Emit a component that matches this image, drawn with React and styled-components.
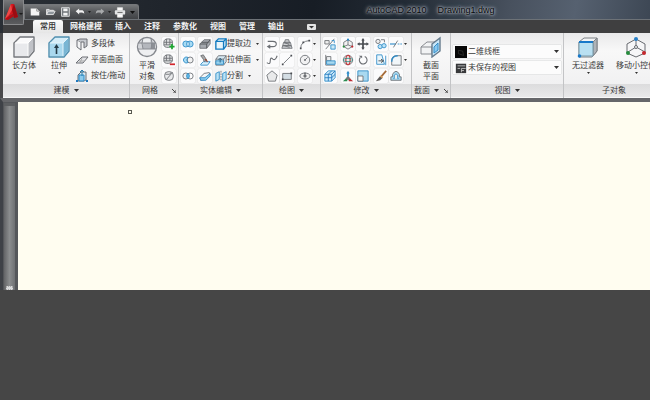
import React from 'react';
import styled, { createGlobalStyle } from 'styled-components';

const GlobalStyle = createGlobalStyle`
	* {
		box-sizing: border-box;
	}

	body {
		margin: 0;
		background: #464646;
		color: #3a3a3a;
		font-family: 'Liberation Sans', 'Noto Sans CJK SC', sans-serif;
		font-size: 8px;
		line-height: 12px;
		overflow-x: hidden;
	}

	button,
	select {
		border: none;
		margin: 0;
		padding: 0;
		background: none;
		color: inherit;
		font: inherit;
	}
`;

const Window = styled.div`
	overflow: hidden;
	background: #4a4a4c;
`;

const Header = styled.header`
	display: flex;
	align-items: flex-start;
	padding-left: 3px;
	background: linear-gradient(100deg, #2a2f35 0%, #20252c 25%, #171d25 48%, #232b35 62%, #48515e 78%, #566170 88%, #3c4653 100%);
`;

const AppButton = styled.button`
	display: flex;
	align-items: center;
	justify-content: center;
	width: 21px;
	height: 25px;
	margin-right: -21px;
	z-index: 1;
	border: 1px solid #88898b;
	border-top: none;
	border-radius: 0 0 2px 0;
	background: linear-gradient(#77787a, #47484b 55%, #5b5c5e);
`;

const HeaderMain = styled.div`
	flex: 1;
	min-width: 0;
`;

const TitleBar = styled.div`
	display: flex;
	align-items: flex-end;
	height: 20px;
	padding-left: 21px;
	border-bottom: 1px solid #6d7277;
`;

const QuickAccess = styled.div`
	display: flex;
	align-items: center;
	height: 15px;
	padding: 0 1px 0 2px;
	border: 1px solid #75777a;
	border-bottom: none;
	border-radius: 0 3px 0 0;
	background: linear-gradient(#77797b, #55575a 50%, #404245);
`;

const QuickButton = styled.button`
	display: flex;
	align-items: center;
	justify-content: center;
	width: ${props => props.$width || 15}px;
	height: 13px;
`;

const WindowTitle = styled.h1`
	flex: 1;
	display: flex;
	justify-content: center;
	gap: 11px;
	margin: 0;
	padding-left: 72px;
	color: #07090d;
	font: 9px/18px 'Liberation Sans', sans-serif;
	text-shadow: 0 0 2px #a4aab2, 0 0 3px #a4aab2, 0 0 4px #7e8690, 0 0 5px #7e8690;
`;

const Tabs = styled.nav`
	display: flex;
	gap: 1px;
	height: 13px;
	padding-left: 30px;
	background: #3f3f40;
`;

const Tab = styled.button`
	padding: 1px ${props => (props.$active ? 7 : 6)}px 0;
	border-radius: 2px 2px 0 0;
	background: ${props => (props.$active ? 'linear-gradient(#fafafa, #e6e6e6)' : 'none')};
	color: ${props => (props.$active ? '#333' : '#f4f4f4')};
	font-weight: ${props => (props.$active ? 500 : 700)};
`;

const TabToggle = styled.button`
	display: flex;
	align-items: center;
	padding: 1px 16px 0;
`;

const Ribbon = styled.section`
	display: flex;
	margin-left: 3px;
	height: 65px;
	overflow: hidden;
	background: #f0f0f1;
`;

const PanelBox = styled.div`
	display: flex;
	flex-direction: column;
	flex: ${props => (props.$grow ? 1 : 0)} 0 ${props => props.$width}px;
	border-right: 1px solid #c3c4c6;
`;

const PanelBody = styled.div`
	flex: 1;
	display: flex;
	gap: ${props => props.$gap || 0}px;
	padding: 2px 2px 0;
	background: linear-gradient(#e9e9ea, #f8f8f8 35%, #f1f1f2);
`;

const PanelTitle = styled.h2`
	display: flex;
	align-items: center;
	justify-content: center;
	gap: 4px;
	height: 14px;
	margin: 0;
	padding-left: ${props => (props.$inset ? 10 : 0)}px;
	background: linear-gradient(#dcdcdd, #e9e9ea);
	border-bottom: 1px solid #f8f8f8;
	font-size: 8px;
	font-weight: 400;
`;

const Launcher = styled.span`
	display: flex;
	margin-left: ${props => (props.$wide ? 10 : 1)}px;
`;

const Group = styled.div`
	display: flex;
`;

const Column = styled.div`
	display: grid;
	grid-template-columns: repeat(${props => props.$cols || 1}, auto);
	grid-auto-rows: 14px;
	gap: 2px 1px;
	align-content: start;
	padding-top: 2px;
`;

const ToolButton = styled.button`
	display: flex;
	align-items: center;
	justify-content: center;
	width: 14px;
	height: 14px;
	border-radius: 1px;
	background: #fbfbfc;
	box-shadow: 0 0 1px #b4b5b8;
`;

const ArrowButton = styled.button`
	display: flex;
	align-items: center;
	justify-content: center;
	width: 5px;
	height: 14px;
`;

const LabelButton = styled.button`
	display: flex;
	align-items: center;
	gap: ${props => (props.$tight ? 0 : 2)}px;
	white-space: nowrap;
`;

const LabelArrow = styled.span`
	display: flex;
	padding-left: 5px;
`;

const LargeButton = styled.button`
	display: flex;
	flex: 0 0 auto;
	flex-direction: column;
	align-items: center;
	width: ${props => props.$width || 34}px;
	padding-top: 1px;
	line-height: 11px;
	white-space: nowrap;
`;

const LargeLabel = styled.span`
	padding: 2px 0 1px;
`;

const ViewFields = styled.div`
	flex: 1;
	display: flex;
	flex-direction: column;
	justify-content: center;
	gap: 3px;
`;

const Field = styled.label`
	display: flex;
	align-items: center;
	gap: 1px;
	height: 13px;
	padding: 0 2px;
	background: #fcfcfc;
	box-shadow: 0 0 1px #a8a9ac;
`;

const FieldSelect = styled.select`
	flex: 1;
	min-width: 0;
	appearance: none;
	outline: none;
`;

const Workspace = styled.main`
	display: flex;
	min-height: 192px;
	border-top: 4px solid #66676a;
	border-left: 3px solid #3f4247;
`;

const Dock = styled.aside`
	display: flex;
	flex-direction: column;
	justify-content: space-between;
	align-items: center;
	width: 15px;
	border: solid #55575a;
	border-width: 1px 3px 0 1px;
	background: linear-gradient(90deg, #636466, #8b8d8e 50%, #6e7072);
`;

const DockGrip = styled.div`
	width: 11px;
	height: 3px;
	background: #5d5f61;
`;

const DockHandle = styled.div`
	width: 7px;
	height: 4px;
	border: 1px dotted #aaa;
	background: #d9dadb;
`;

const Canvas = styled.section`
	flex: 1;
	padding: 8px 110px;
	background: #fffdf0;
`;

const Pickbox = styled.div`
	width: 4px;
	height: 4px;
	outline: 1px solid #595951;
	outline-offset: -1px;
`;

const G = '#6c6f74';
const B = '#2e8bc7';

const icons = {
	newFile: (
		<>
			<path d="M2 3h7l3 3v5H2z" fill="#f4f4f4" />
			<path d="M9 3v3h3" fill="none" stroke="#888" />
		</>
	),
	open: (
		<>
			<path d="M3 10V4h3l1 1h4v2" fill="#b5b9bd" stroke="#eee" />
			<path d="M3 10l2-4h8l-2 4z" fill="#8f969c" stroke="#eee" />
		</>
	),
	save: (
		<>
			<path d="M3 2h9v10H3z" fill="#6f7479" stroke="#eceeef" />
			<path d="M5 3h5v3H5zM5 8h5v3H5z" fill="#f2f3f4" />
		</>
	),
	undo: (
		<path d="M2 6l4-3v2h4q2 1 2 4-2-2-6-1v2z" fill="#f2f2f2" />
	),
	redo: (
		<path d="M12 6L8 3v2H4Q2 6 2 9q2-2 6-1v2z" fill="#a8aaac" />
	),
	print: (
		<>
			<path d="M4 2h6v3H4zM4 9h6v4H4z" fill="#fff" stroke="#ddd" />
			<rect x="1" y="5" width="12" height="5" rx="1" fill="#e2e3e4" />
			<path d="M4 7.5h6" stroke="#555" />
		</>
	),
	box: (
		<>
			<path d="M1 7l6-6h14v14l-5 6H1z" fill="#f9f9fa" stroke="#74777c" strokeWidth="1.4" strokeLinejoin="round" />
			<path d="M15 7l5-5v13l-5 6z" fill="#c0c2c7" />
			<path d="M2 7h13v13H2z" fill="#e8e9ec" />
			<path d="M2 7h13l5-5M15 7v13" fill="none" stroke="#fff" />
		</>
	),
	extrude: (
		<>
			<path d="M1 7l6-6h14v14l-5 6H1z" fill="#d6edf8" stroke="#4f8eae" strokeWidth="1.4" strokeLinejoin="round" />
			<path d="M15 7l5-5v13l-5 6z" fill="#79b6d4" />
			<path d="M2 7h13v13H2z" fill="#a9d8ee" />
			<path d="M2 7h13l5-5M15 7v13" fill="none" stroke="#e4f4fb" />
			<path d="M8.500 18v-7" stroke="#253b47" strokeWidth="1.6" />
			<path d="M6 12l2.500-4 2.500 4z" fill="#253b47" />
		</>
	),
	sphere: (
		<>
			<circle cx="11" cy="11" r="9.500" fill="#eeeff1" stroke="#85888e" strokeWidth="1.400" />
			<path d="M3 12V8q3-6 8-6t8 6v4z" fill="#d3d5d9" />
			<path d="M7 7h8v6H7z" fill="#b4b7bd" />
			<path d="M15 7h4v6h-4z" fill="#8d9096" />
			<path d="M7 3h7v4H7z" fill="#eceef0" />
			<path d="M2 13h18M3 7h16M7 2q-2 5 0 11M15 2q2 5 0 11" fill="none" stroke="#888b91" />
		</>
	),
	section: (
		<>
			<path d="M1 11l6-5h8v9l-3 3H1z" fill="#f2f3f4" stroke="#888b90" />
			<path d="M1 11h11v7M12 11l4-5" fill="none" stroke="#888b90" />
			<path d="M12 8l8-6v13l-8 6z" fill="#c8e6f8" stroke="#667b8c" strokeWidth="1.400" />
			<path d="M14 11l4-4v7l-4 3z" fill="#8ac8ef" stroke="#368fc8" />
		</>
	),
	filter: (
		<>
			<path d="M2 6l5-4h13v13l-5 6H2z" fill="#f3f4f5" stroke="#7d8085" strokeLinejoin="round" />
			<path d="M16 6l4-4v13l-4 5z" fill="#afb3b8" stroke="#7d8085" />
			<path d="M2 6h14v14H2z" fill="#b9e0f2" stroke="#7799a8" />
			<path d="M2 6h14" stroke="#1878c9" strokeWidth="2" />
			<circle cx="2.500" cy="20" r="1.800" fill="#1878c9" />
		</>
	),
	gizmo: (
		<>
			<path d="M11 3l9 5v9l-9 4-9-4V8z" fill="#f6f6f7" stroke="#686b70" />
			<path d="M11 11V3M11 11l9 5M11 11l-8 5" stroke="#686b70" fill="none" />
			<circle cx="11" cy="11" r="1.500" fill="#f5f5f5" stroke="#686b70" />
			<circle cx="11" cy="3" r="2" fill="#267fc7" />
			<circle cx="19" cy="17" r="2" fill="#c5282d" />
			<circle cx="3" cy="17" r="2" fill="#258c3c" />
		</>
	),
	polysolid: (
		<>
			<path d="M2 3l4 2v8l-4-3z" fill="#f2f3f4" stroke={G} />
			<path d="M2 3l3-1h7v7l-3 2V5H6" fill="#c6c9ce" stroke={G} />
		</>
	),
	planar: (
		<>
			<path d="M1 10l6-6h6l-5 6z" fill="#e2e3e6" stroke={G} />
			<path d="M4 8h6M7 5l-2 5" stroke="#aaa" fill="none" />
		</>
	),
	presspull: (
		<>
			<path d="M3 6l3-3h5v8l-2 1H3z" fill="#d5e9f4" stroke={G} />
			<path d="M4 6h5v6H4z" fill="#8ccbed" stroke={B} />
			<path d="M7 7V1M5 3l2-2 2 2" stroke="#277eae" fill="none" />
			<path d="M1 11h2v2H1zM11 11h2v2h-2z" fill="#1e79bf" />
		</>
	),
	meshMore: (
		<>
			<path d="M1 5q0-4 5-4 5 0 5 4v3q-1 3-5 3-5 0-5-3z" fill="#dcdddf" stroke={G} />
			<path d="M1 5h10M1 8h8M4 1v7M8 1v7" stroke={G} fill="none" />
			<path d="M10.500 7v6M7.500 10h6" stroke="#1ba62f" strokeWidth="2" />
		</>
	),
	meshLess: (
		<>
			<path d="M1 5q0-4 5-4 5 0 5 4v3q-1 3-5 3-5 0-5-3z" fill="#dcdddf" stroke={G} />
			<path d="M1 5h10M1 8h10M4 1v7M8 1v7" stroke={G} fill="none" />
			<path d="M8 12h6" stroke="#d3262d" strokeWidth="2" />
		</>
	),
	meshRefine: (
		<>
			<rect x="2" y="2" width="10" height="10" rx="4" fill="#e9eaec" stroke={G} />
			<path d="M4 11l7-8M3 5h4q2 0 2-2" stroke={G} fill="none" />
		</>
	),
	union: (
		<>
			<circle cx="4.500" cy="7" r="3.500" fill="#a7dbf4" stroke={B} />
			<circle cx="9.500" cy="7" r="3.500" fill="#a7dbf4" stroke={B} />
			<ellipse cx="7" cy="7" rx="1.500" ry="3" fill="#d8effa" stroke={B} />
		</>
	),
	subtract: (
		<>
			<circle cx="9.500" cy="7" r="3.500" fill="#f2f2f2" stroke={G} />
			<path d="M7 4a3.500 3.500 0 1 0 0 6q-3-3 0-6z" fill="#a7dbf4" stroke={B} />
		</>
	),
	intersect: (
		<>
			<circle cx="4.500" cy="7" r="3.500" fill="#f2f2f2" stroke={G} />
			<circle cx="9.500" cy="7" r="3.500" fill="none" stroke={G} />
			<ellipse cx="7" cy="7" rx="1.500" ry="3" fill="#6cc1eb" stroke={B} />
		</>
	),
	slice: (
		<>
			<path d="M1 7l5-5h7v5l-4 5H1z" fill="#a5a9af" stroke={G} />
			<path d="M1 7h8v5M9 7l4-5M3 5h8" stroke="#4b4e53" fill="none" />
		</>
	),
	thicken: (
		<>
			<path d="M2 12l3-3h8l-3 4H2z" fill="#d8effa" stroke={B} />
			<path d="M2 2l3-1 4 6-3 2-1-3z" fill="#aaa" stroke={G} />
			<path d="M7 6l3 3" stroke="#9b4935" strokeWidth="1.500" />
		</>
	),
	imprint: (
		<>
			<path d="M1 9l5-5 6-1 1 3-5 5-6 1z" fill="#f4f5f6" stroke={G} />
			<path d="M1 9l6 0 6-5v3l-5 5-6 0z" fill="#8acbed" stroke={B} />
		</>
	),
	edges: (
		<>
			<path d="M1 4l3-3h9v8l-3 4H1z" fill="#e8f5fb" stroke="#137bc0" strokeWidth="1.600" />
			<path d="M1 4h9v9M10 4l3-3" fill="none" stroke="#137bc0" strokeWidth="1.600" />
		</>
	),
	faces: (
		<>
			<path d="M1 6l3-4h9v7l-3 4H1z" fill="#d5e8f2" stroke={G} />
			<path d="M1 6h9v6M10 6l3-4" fill="none" stroke={G} />
			<path d="M1 8h9v4H1z" fill="#9bd4ef" stroke={B} />
			<path d="M6 10V5M4 7l2-2 2 2" fill="none" stroke="#285a78" />
		</>
	),
	separate: (
		<>
			<path d="M1 4l4-2v9l-4 2zM9 4l4-2v9l-4 2z" fill="#bde3f5" stroke={B} />
			<path d="M7 1v12" stroke={G} strokeDasharray="2 1" />
		</>
	),
	polyline: <path d="M2 4h6q4 0 4 3t-4 3H2M5 8l-3 2 3 2" fill="none" stroke={G} strokeWidth="1.300" />,
	helix: (
		<>
			<path d="M5 2h4l1 4H4zM3 5h8l1 4H2zM2 9h10l1 3H1z" fill="#cfd1d4" stroke={G} />
			<path d="M4 5l6 3M4 9l6 2" stroke={G} />
		</>
	),
	spline: <path d="M1 10q4 3 4-2 0-5 3-2 3 2 5-4" fill="none" stroke={G} strokeWidth="1.300" />,
	line: (
		<>
			<path d="M3 11l8-8" stroke={G} />
			<path d="M1 11h2v2H1zM11 1h2v2h-2z" fill="#4a4d52" />
		</>
	),
	polygon: <path d="M7 1l6 5-2 7H3L1 6z" fill="#e9eaeb" stroke={G} />,
	rect: (
		<>
			<path d="M2 4h10v7H2z" fill="#d4dee5" stroke={G} />
			<path d="M1 10h2v2H1zM11 3h2v2h-2z" fill="#4a4d52" />
		</>
	),
	arc: (
		<>
			<path d="M2 12q0-8 10-9" fill="none" stroke={G} />
			<path d="M1 11h2v2H1zM4 4h2v2H4zM11 2h2v2h-2z" fill="#4a4d52" />
		</>
	),
	circle: (
		<>
			<circle cx="7" cy="7" r="5.500" fill="#f1f1f2" stroke={G} />
			<path d="M7 7l3-3" stroke={G} />
			<circle cx="7" cy="7" r="1.200" fill={G} />
		</>
	),
	ellipse: (
		<>
			<ellipse cx="7" cy="7" rx="6" ry="3.500" fill="#eee" stroke={G} />
			<path d="M7 3v6M5 7h4" stroke="#4a4d52" strokeWidth="1.300" />
		</>
	),
	align3d: (
		<>
			<path d="M1 3h5v4H1z" fill="#eee" stroke={G} />
			<path d="M8 8h5v5H8z" fill="#cdeaf7" stroke={B} />
			<path d="M2 13L12 1" stroke={G} />
			<path d="M9 3h3v3" fill="none" stroke={B} />
		</>
	),
	alignL: (
		<>
			<path d="M2 1v12h11" stroke={G} fill="none" />
			<path d="M3 3h5v5H3z" fill="#eef0f2" stroke={G} />
			<path d="M3 8h10v4H3z" fill="#a9d9f0" stroke={B} />
		</>
	),
	array3d: (
		<>
			<path d="M1 5l4-4h8v8l-4 4H1z" fill="#cdeafa" stroke={B} />
			<path d="M1 5h8v8M9 5l4-4M1 9h8l4-4M5 5v8M5 5l4-4" fill="none" stroke="#2179be" />
		</>
	),
	move3d: (
		<>
			<path d="M7 2l5 3v5l-5 3-5-3V5z" fill="#f3f3f3" stroke={G} />
			<path d="M7 8V2M7 8l5 2M7 8l-5 2" stroke={G} />
			<circle cx="7" cy="2" r="1.300" fill={B} />
			<circle cx="12" cy="10" r="1.300" fill="#c6272d" />
			<circle cx="2" cy="10" r="1.300" fill="#288f3a" />
		</>
	),
	rotate3d: (
		<>
			<circle cx="7" cy="7" r="5.500" fill="#eee" stroke={G} />
			<ellipse cx="7" cy="7" rx="2.500" ry="5.500" fill="none" stroke="#c63b40" strokeWidth="1.400" />
			<ellipse cx="7" cy="7" rx="5.500" ry="2" fill="none" stroke="#318b83" />
		</>
	),
	scale3d: (
		<>
			<path d="M7 8V3" stroke={B} strokeWidth="2" />
			<path d="M7 8l6 5H8z" fill="#bd2c31" />
			<path d="M7 8l-6 5h5z" fill="#298b50" />
			<path d="M7 7l3 3-3 2-3-2z" fill="#777" />
			<path d="M5 4l2-3 2 3z" fill={B} />
		</>
	),
	move: <path d="M7 0l2 3H5zM7 14l2-3H5zM0 7l3-2v4zM14 7l-3-2v4zM6 3h2v8H6zM3 6h8v2H3z" fill="#4a4d52" />,
	rotate: (
		<>
			<path d="M4 4a4.500 4.500 0 1 0 5-1" stroke={G} strokeWidth="1.300" fill="none" />
			<path d="M2 2h4v3z" fill={G} />
		</>
	),
	scale: (
		<>
			<path d="M1 1h12v12H1z" fill="#a9d9f0" stroke={B} />
			<path d="M1 7h6v6H1z" fill="#f8f8f8" stroke={G} />
		</>
	),
	copy: (
		<>
			<circle cx="3.500" cy="4" r="2.500" fill="#eee" stroke={G} />
			<circle cx="6" cy="10" r="2.500" fill="#bfe4f7" stroke={B} />
			<circle cx="10.500" cy="9" r="2.500" fill="#bfe4f7" stroke={B} />
			<path d="M7 2h4v3" stroke={G} fill="none" />
		</>
	),
	stretch: (
		<>
			<path d="M2 1h6l3 11H2z" fill="#e9f6fc" stroke={B} />
			<path d="M4 8h5M7 6l3 2-3 2" fill="none" stroke="#444" />
			<path d="M12.500 2v11" stroke={B} />
		</>
	),
	erase: (
		<>
			<path d="M13 1L7 8" stroke="#a56b38" strokeWidth="2" />
			<path d="M6 7l3 2-3 3-5 1z" fill="#5c5957" />
			<path d="M6 7l3 2" stroke="#e0a55d" strokeWidth="1.500" />
		</>
	),
	trim: (
		<>
			<path d="M0 7h7" stroke={B} strokeWidth="1.300" />
			<path d="M9 7h5" stroke={B} strokeDasharray="2 1" />
			<path d="M4 11l5-8" stroke={G} />
		</>
	),
	fillet: (
		<>
			<path d="M2 13V8q0-6 6-6h5v11z" fill="#f1f6f9" stroke={G} />
			<path d="M2 9q0-7 7-7" fill="none" stroke={B} strokeWidth="1.600" />
		</>
	),
	offset: (
		<>
			<path d="M1 12V8h2V5q4-7 8 0v3h2v4z" fill="#a9d9ef" stroke={G} />
			<path d="M4 10h1V6q2-3 4 0v4h1" fill="#eee" stroke={B} />
		</>
	),
	wireframe: (
		<>
			<rect x="0" y="0" width="14" height="14" fill="#080808" />
			<path d="M4 5l5 1 1 5M4 5v4l6 2" fill="none" stroke="#3d3c39" strokeWidth=".7" />
		</>
	),
	savedView: (
		<>
			<rect x="1" y="2" width="12" height="11" fill="#38393b" />
			<path d="M3 4.500h9M3 7.500h3M7.500 12V7.500h5M7.500 10h3" stroke="#c9c9c9" fill="none" />
		</>
	),
};

function Icon({ name, size = 14 }) {
	const view = size > 16 ? 22 : 14;
	return (
		<svg width={size} height={size} viewBox={`0 0 ${view} ${view}`} aria-hidden="true">
			{icons[name]}
		</svg>
	);
}

function Caret({ small, color = '#333' }) {
	return small ? (
		<svg width="3" height="2" viewBox="0 0 3 2" aria-hidden="true">
			<path d="M0 0h3L1.500 2z" fill={color} />
		</svg>
	) : (
		<svg width="5" height="3" viewBox="0 0 5 3" aria-hidden="true">
			<path d="M0 0h5L2.500 3z" fill={color} />
		</svg>
	);
}

function Panel({ title, width, gap, grow, menu, launcher, children }) {
	return (
		<PanelBox $width={width} $grow={grow}>
			<PanelBody $gap={gap}>{children}</PanelBody>
			<PanelTitle $inset={launcher && !menu}>
				{title}
				{menu && <Caret />}
				{launcher && (
					<Launcher $wide={!menu}>
						<svg width="4" height="4" viewBox="0 0 4 4" aria-hidden="true">
							<path d="M0 0l3 3M4 1v3H1" stroke="#444" fill="none" />
						</svg>
					</Launcher>
				)}
			</PanelTitle>
		</PanelBox>
	);
}

function Tools({ names, cols }) {
	return (
		<Column $cols={cols}>
			{names.map(name => (
				<ToolButton key={name} aria-label={name}>
					<Icon name={name} size={12} />
				</ToolButton>
			))}
		</Column>
	);
}

function Arrows({ count }) {
	return (
		<Column>
			{Array.from({ length: count }, (_, i) => (
				<ArrowButton key={i} aria-label="more">
					<Caret small />
				</ArrowButton>
			))}
		</Column>
	);
}

function Large({ icon, lines, width, menu }) {
	return (
		<LargeButton $width={width}>
			<Icon name={icon} size={22} />
			<LargeLabel>
				{lines.map(line => (
					<div key={line}>{line}</div>
				))}
			</LargeLabel>
			{menu && <Caret small />}
		</LargeButton>
	);
}

function Labelled({ icon, text, tight, menu }) {
	return (
		<LabelButton $tight={tight}>
			<Icon name={icon} size={tight ? 12 : 14} />
			{text}
			{menu && (
				<LabelArrow>
					<Caret small />
				</LabelArrow>
			)}
		</LabelButton>
	);
}

const tabs = ['常用', '网格建模', '插入', '注释', '参数化', '视图', '管理', '输出'];

function App() {
	return (
		<>
			<GlobalStyle />
			<Window>
				<Header>
					<AppButton aria-label="menu">
						<svg width="19" height="22" viewBox="0 0 19 22" aria-hidden="true">
							<path d="M1 18L7 3h3l4 13-4 1-1-4-4 2-1 4z" fill="#d4171e" />
							<path d="M7 3l1 6-3 5-4 4z" fill="#ee4a48" />
							<path d="M10 3l4 13-4 1-2-8z" fill="#9c0c12" />
							<path d="M1 18l8-5 1 2-6 4z" fill="#b80d14" />
							<path d="M15 12h4l-2 2z" fill="#1c1c1c" />
						</svg>
					</AppButton>
					<HeaderMain>
						<TitleBar>
							<QuickAccess>
								<QuickButton aria-label="new"><Icon name="newFile" size={12} /></QuickButton>
								<QuickButton aria-label="open"><Icon name="open" size={12} /></QuickButton>
								<QuickButton aria-label="save"><Icon name="save" size={12} /></QuickButton>
								<QuickButton aria-label="undo"><Icon name="undo" size={12} /></QuickButton>
								<QuickButton $width={5} aria-label="undo list"><Caret small color="#222" /></QuickButton>
								<QuickButton aria-label="redo"><Icon name="redo" size={12} /></QuickButton>
								<QuickButton $width={5} aria-label="redo list"><Caret small color="#222" /></QuickButton>
								<QuickButton aria-label="print"><Icon name="print" size={12} /></QuickButton>
								<QuickButton $width={10} aria-label="customize"><Caret color="#111" /></QuickButton>
							</QuickAccess>
							<WindowTitle>
								<span>AutoCAD 2010</span>
								<span>Drawing1.dwg</span>
							</WindowTitle>
						</TitleBar>
						<Tabs>
							{tabs.map((tab, i) => (
								<Tab key={tab} $active={i === 0}>{tab}</Tab>
							))}
							<TabToggle aria-label="minimize">
								<svg width="9" height="6" viewBox="0 0 9 6" aria-hidden="true">
									<rect width="9" height="6" rx="1" fill="#e4e4e4" />
									<path d="M2 2h5L4.500 4.500z" fill="#333" />
								</svg>
							</TabToggle>
						</Tabs>
					</HeaderMain>
				</Header>
				<Ribbon>
					<Panel title="建模" width={127} menu>
						<Large icon="box" lines={['长方体']} width={38} menu />
						<Large icon="extrude" lines={['拉伸']} width={32} menu />
						<Column>
							<Labelled icon="polysolid" text="多段体" />
							<Labelled icon="planar" text="平面曲面" />
							<Labelled icon="presspull" text="按住/拖动" />
						</Column>
					</Panel>
					<Panel title="网格" width={49} launcher>
						<Large icon="sphere" lines={['平滑', '对象']} width={30} />
						<Tools names={['meshMore', 'meshLess', 'meshRefine']} />
					</Panel>
					<Panel title="实体编辑" width={84} gap={3} menu>
						<Tools names={['union', 'subtract', 'intersect']} />
						<Tools names={['slice', 'thicken', 'imprint']} />
						<Column>
							<Labelled icon="edges" text="提取边" tight menu />
							<Labelled icon="faces" text="拉伸面" tight menu />
							<Labelled icon="separate" text="分割" tight menu />
						</Column>
					</Panel>
					<Panel title="绘图" width={58} gap={4} menu>
						<Tools cols={2} names={['polyline', 'helix', 'spline', 'line', 'polygon', 'rect']} />
						<Group>
							<Tools names={['arc', 'circle', 'ellipse']} />
							<Arrows count={3} />
						</Group>
					</Panel>
					<Panel title="修改" width={91} gap={4} menu>
						<Tools names={['align3d', 'alignL', 'array3d']} />
						<Tools cols={2} names={['move3d', 'move', 'rotate3d', 'rotate', 'scale3d', 'scale']} />
						<Group>
							<Tools cols={2} names={['copy', 'trim', 'stretch', 'fillet', 'erase', 'offset']} />
							<Arrows count={2} />
						</Group>
					</Panel>
					<Panel title="截面" width={39} menu launcher>
						<Large icon="section" lines={['截面', '平面']} width={34} />
					</Panel>
					<Panel title="视图" width={113} menu>
						<ViewFields>
							<Field>
								<Icon name="wireframe" size={12} />
								<FieldSelect aria-label="视觉样式">
									<option>二维线框</option>
								</FieldSelect>
								<Caret />
							</Field>
							<Field>
								<Icon name="savedView" size={12} />
								<FieldSelect aria-label="视图">
									<option>未保存的视图</option>
								</FieldSelect>
								<Caret />
							</Field>
						</ViewFields>
					</Panel>
					<Panel title="子对象" width={100} grow>
						<Large icon="filter" lines={['无过滤器']} width={44} menu />
						<Large icon="gizmo" lines={['移动小控件']} width={52} menu />
					</Panel>
				</Ribbon>
				<Workspace>
					<Dock>
						<DockGrip />
						<DockHandle />
					</Dock>
					<Canvas>
						<Pickbox />
					</Canvas>
				</Workspace>
			</Window>
		</>
	);
}

export default App;
